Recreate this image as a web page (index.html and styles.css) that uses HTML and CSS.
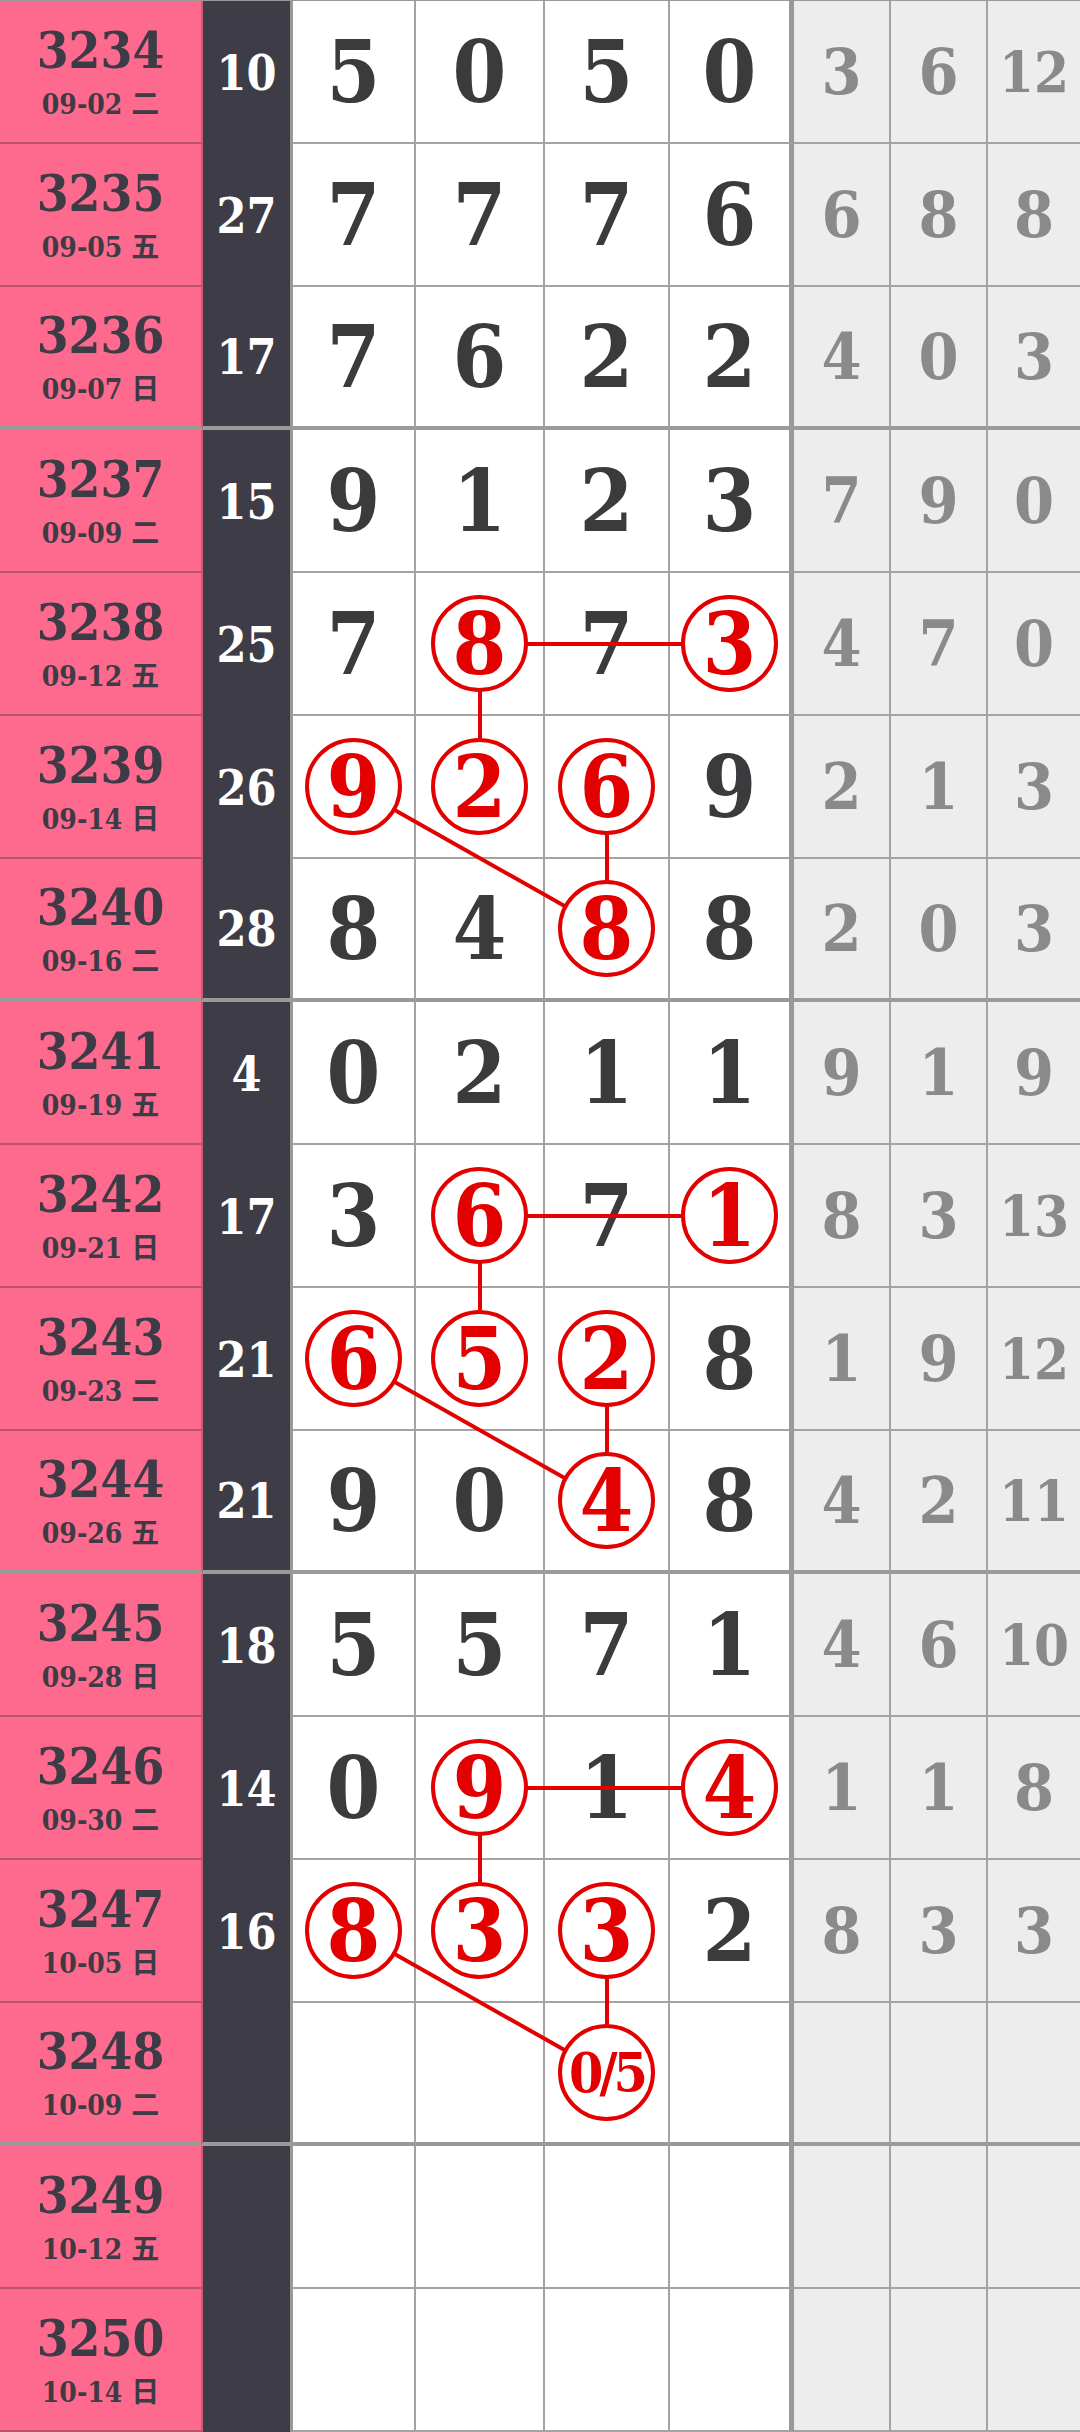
FILE: index.html
```html
<!DOCTYPE html>
<html lang="zh">
<head>
  <meta charset="UTF-8" />
  <meta name="viewport" content="width=device-width, initial-scale=1.0"/>
  <title>走势图</title>
  <link rel="stylesheet" href="styles.css">
</head>
<body>
  <div class="chart">
    <div class="row">
      <div class="issue"><b>3234</b><span>09-02 二</span></div>
      <div class="sum">10</div>
      <div class="d">5</div><div class="d">0</div><div class="d">5</div><div class="d">0</div>
      <div class="g">3</div><div class="g">6</div><div class="g two">12</div>
    </div>
    <div class="row">
      <div class="issue"><b>3235</b><span>09-05 五</span></div>
      <div class="sum">27</div>
      <div class="d">7</div><div class="d">7</div><div class="d">7</div><div class="d">6</div>
      <div class="g">6</div><div class="g">8</div><div class="g">8</div>
    </div>
    <div class="row end">
      <div class="issue"><b>3236</b><span>09-07 日</span></div>
      <div class="sum">17</div>
      <div class="d">7</div><div class="d">6</div><div class="d">2</div><div class="d">2</div>
      <div class="g">4</div><div class="g">0</div><div class="g">3</div>
    </div>

    <div class="row">
      <div class="issue"><b>3237</b><span>09-09 二</span></div>
      <div class="sum">15</div>
      <div class="d">9</div><div class="d">1</div><div class="d">2</div><div class="d">3</div>
      <div class="g">7</div><div class="g">9</div><div class="g">0</div>
    </div>
    <div class="row">
      <div class="issue"><b>3238</b><span>09-12 五</span></div>
      <div class="sum">25</div>
      <div class="d">7</div><div class="d"><i class="hit">8</i></div><div class="d">7</div><div class="d"><i class="hit">3</i></div>
      <div class="g">4</div><div class="g">7</div><div class="g">0</div>
    </div>
    <div class="row">
      <div class="issue"><b>3239</b><span>09-14 日</span></div>
      <div class="sum">26</div>
      <div class="d"><i class="hit">9</i></div><div class="d"><i class="hit">2</i></div><div class="d"><i class="hit">6</i></div><div class="d">9</div>
      <div class="g">2</div><div class="g">1</div><div class="g">3</div>
    </div>
    <div class="row end">
      <div class="issue"><b>3240</b><span>09-16 二</span></div>
      <div class="sum">28</div>
      <div class="d">8</div><div class="d">4</div><div class="d"><i class="hit">8</i></div><div class="d">8</div>
      <div class="g">2</div><div class="g">0</div><div class="g">3</div>
    </div>

    <div class="row">
      <div class="issue"><b>3241</b><span>09-19 五</span></div>
      <div class="sum">4</div>
      <div class="d">0</div><div class="d">2</div><div class="d">1</div><div class="d">1</div>
      <div class="g">9</div><div class="g">1</div><div class="g">9</div>
    </div>
    <div class="row">
      <div class="issue"><b>3242</b><span>09-21 日</span></div>
      <div class="sum">17</div>
      <div class="d">3</div><div class="d"><i class="hit">6</i></div><div class="d">7</div><div class="d"><i class="hit">1</i></div>
      <div class="g">8</div><div class="g">3</div><div class="g two">13</div>
    </div>
    <div class="row">
      <div class="issue"><b>3243</b><span>09-23 二</span></div>
      <div class="sum">21</div>
      <div class="d"><i class="hit">6</i></div><div class="d"><i class="hit">5</i></div><div class="d"><i class="hit">2</i></div><div class="d">8</div>
      <div class="g">1</div><div class="g">9</div><div class="g two">12</div>
    </div>
    <div class="row end">
      <div class="issue"><b>3244</b><span>09-26 五</span></div>
      <div class="sum">21</div>
      <div class="d">9</div><div class="d">0</div><div class="d"><i class="hit">4</i></div><div class="d">8</div>
      <div class="g">4</div><div class="g">2</div><div class="g two">11</div>
    </div>

    <div class="row">
      <div class="issue"><b>3245</b><span>09-28 日</span></div>
      <div class="sum">18</div>
      <div class="d">5</div><div class="d">5</div><div class="d">7</div><div class="d">1</div>
      <div class="g">4</div><div class="g">6</div><div class="g two">10</div>
    </div>
    <div class="row">
      <div class="issue"><b>3246</b><span>09-30 二</span></div>
      <div class="sum">14</div>
      <div class="d">0</div><div class="d"><i class="hit">9</i></div><div class="d">1</div><div class="d"><i class="hit">4</i></div>
      <div class="g">1</div><div class="g">1</div><div class="g">8</div>
    </div>
    <div class="row">
      <div class="issue"><b>3247</b><span>10-05 日</span></div>
      <div class="sum">16</div>
      <div class="d"><i class="hit">8</i></div><div class="d"><i class="hit">3</i></div><div class="d"><i class="hit">3</i></div><div class="d">2</div>
      <div class="g">8</div><div class="g">3</div><div class="g">3</div>
    </div>
    <div class="row end">
      <div class="issue"><b>3248</b><span>10-09 二</span></div>
      <div class="sum"></div>
      <div class="d"></div><div class="d"></div><div class="d"><i class="hit guess">0/5</i></div><div class="d"></div>
      <div class="g"></div><div class="g"></div><div class="g"></div>
    </div>

    <div class="row">
      <div class="issue"><b>3249</b><span>10-12 五</span></div>
      <div class="sum"></div>
      <div class="d"></div><div class="d"></div><div class="d"></div><div class="d"></div>
      <div class="g"></div><div class="g"></div><div class="g"></div>
    </div>
    <div class="row">
      <div class="issue"><b>3250</b><span>10-14 日</span></div>
      <div class="sum"></div>
      <div class="d"></div><div class="d"></div><div class="d"></div><div class="d"></div>
      <div class="g"></div><div class="g"></div><div class="g"></div>
    </div>

    <!-- connecting lines between the circled digits -->
    <svg class="links" width="1080" height="2432" viewBox="0 0 1080 2432">
      <g stroke="#e30000" stroke-width="4" fill="none">
        <line x1="480" y1="643" x2="732" y2="643"/>
        <line x1="480" y1="643" x2="480" y2="786"/>
        <line x1="607" y1="786" x2="607" y2="929"/>
        <line x1="354" y1="786" x2="607" y2="929"/>

        <line x1="480" y1="1215" x2="732" y2="1215"/>
        <line x1="480" y1="1215" x2="480" y2="1358"/>
        <line x1="607" y1="1358" x2="607" y2="1501"/>
        <line x1="354" y1="1358" x2="607" y2="1501"/>

        <line x1="480" y1="1787" x2="732" y2="1787"/>
        <line x1="480" y1="1787" x2="480" y2="1930"/>
        <line x1="607" y1="1930" x2="607" y2="2073"/>
        <line x1="354" y1="1930" x2="607" y2="2073"/>
      </g>
    </svg>
  </div>
</body>
</html>
```

FILE: styles.css
```css
* { box-sizing: border-box; }
body {
  margin: 0;
  background: #fff;
  font-family: "DejaVu Serif Condensed", "DejaVu Serif", "Noto Sans CJK SC", serif;
  font-stretch: condensed;
  font-weight: bold;
}
.chart {
  position: relative;
  width: 1080px;
  border-top: 1px solid #999;
}
.row {
  display: grid;
  grid-template-columns: 203px 90px 123px 129px 125px 124px 97px 97px 92px;
  height: 143px;
}
.row > div {
  display: flex;
  align-items: center;
  justify-content: center;
  border-bottom: 2px solid #a3a3a3;
}
.row.end > div { border-bottom: 4px solid #9a9a9a; }

.issue {
  flex-direction: column;
  gap: 14px;
  background: #fd6a8d;
  color: #3c3b46;
  border-right: 2px solid #c95b78;
}
.row > .issue { border-bottom-color: #b9546f; }
.issue b {
  font-size: 51px;
  line-height: 52px;
}
.issue span {
  font-size: 28px;
  line-height: 30px;
}
.row > .sum {
  background: #3d3c47;
  color: #fff;
  font-size: 48px;
  border-bottom: none;
  border-right: 3px solid #9a9a9a;
}
.d {
  background: #fff;
  color: #3b3b3d;
  font-size: 86px;
  line-height: 1;
  border-right: 2px solid #a3a3a3;
}
.row > .d:nth-child(6) { border-right: 5px solid #999; }
.g {
  background: #ededed;
  color: #8a8a8a;
  font-size: 64px;
  line-height: 1;
  border-right: 2px solid #a3a3a3;
}
.g.two { font-size: 56px; }
.row > .g:last-child { border-right: none; }

.hit {
  position: relative;
  z-index: 2;
  display: flex;
  align-items: center;
  justify-content: center;
  width: 97px;
  height: 97px;
  border: 4px solid #e30000;
  border-radius: 50%;
  background: #fff;
  color: #e30000;
  font-style: normal;
  font-size: 86px;
  line-height: 1;
}
.hit.guess {
  font-size: 55px;
  letter-spacing: -4px;
}
.links {
  position: absolute;
  top: 0;
  left: 0;
  z-index: 1;
  pointer-events: none;
}
```
